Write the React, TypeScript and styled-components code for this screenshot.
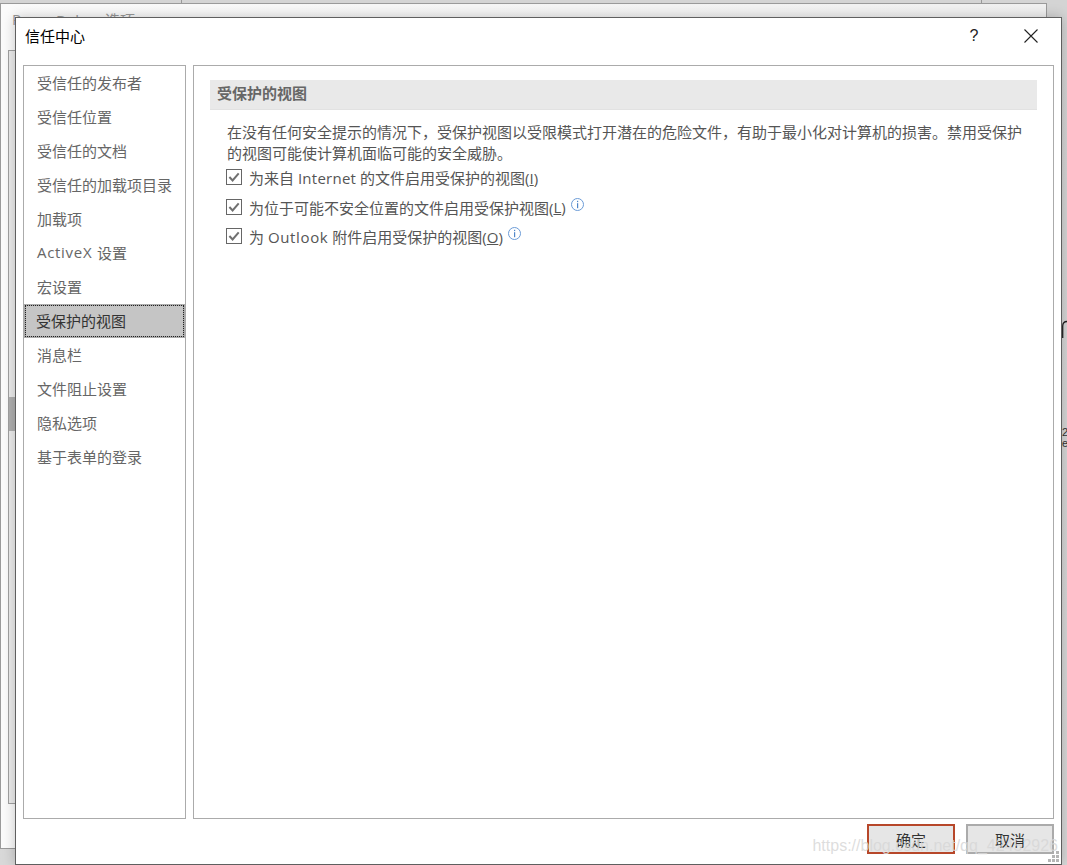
import React from 'react';
import styled, { createGlobalStyle } from 'styled-components';

const FONT = `"Open Sans", "Noto Sans CJK SC", "Noto Sans", sans-serif`;

const Global = createGlobalStyle`
  html, body { margin: 0; padding: 0; width: 1067px; height: 865px; overflow: hidden; background: #d9d9d9; }
  * { box-sizing: border-box; }
  body { font-family: ${FONT}; }
`;

const Desktop = styled.div`
  position: relative;
  width: 1067px;
  height: 865px;
  overflow: hidden;
  background: linear-gradient(#d4d4d4, #d8d8d8);
`;

const BackWindow = styled.div`
  position: absolute;
  left: 0;
  top: 3px;
  width: 1047px;
  height: 846px;
  background: linear-gradient(90deg, #fbfbfb, #f0f0f0);
  border: 1px solid #9a9a9a;
`;

const BackTitle = styled.div`
  position: absolute;
  left: 11px;
  top: 5px;
  font-size: 15px;
  color: #999;
  display: flex;
  gap: 35px;
`;

const BackTitleName = styled.span`
  word-spacing: 6px;
`;

const BackPanel = styled.div`
  position: absolute;
  left: 7px;
  top: 46px;
  width: 1000px;
  height: 754px;
  background: #ececec;
  border: 1px solid #a0a0a0;
`;

const BackThumb = styled.div`
  position: absolute;
  left: 0;
  top: 346px;
  width: 6px;
  height: 34px;
  background: #b0b0b0;
`;

const BackTick = styled.div<{ $x: number }>`
  position: absolute;
  left: ${(p) => p.$x}px;
  top: 0;
  width: 1px;
  height: 3px;
  background: #999;
`;

const BackEdge = styled.div`
  position: absolute;
  left: 1062px;
  top: 320px;
  font-size: 11px;
  line-height: 11px;
  color: #333;
  width: 5px;
  height: 140px;
`;

const EdgeCurve = styled.svg`
  position: absolute;
  left: 0;
  top: 0;
`;

const EdgeText = styled.div`
  position: absolute;
  left: 0;
  top: 107px;
  width: 5px;
  white-space: pre;
  font-family: "Liberation Sans", sans-serif;
`;

const Dialog = styled.div`
  position: absolute;
  left: 15px;
  top: 17px;
  width: 1047px;
  height: 848px;
  background: #fff;
  border: 1px solid #5f5f5f;
  box-shadow: 0 0 12px rgba(0, 0, 0, 0.22);
  display: flex;
  flex-direction: column;
`;

const TitleBar = styled.div`
  height: 47px;
  flex: none;
  display: flex;
  align-items: center;
  padding: 0 23px 12px 9px;
  color: #000;
`;

const Title = styled.div`
  flex: 1;
  font-size: 15px;
`;

const Help = styled.div`
  width: 14px;
  margin-right: 43px;
  font-size: 16px;
  font-family: "Liberation Sans", sans-serif;
  color: #222;
  text-align: center;
`;

const Body = styled.div`
  flex: none;
  height: 754px;
  display: flex;
  gap: 7px;
  padding: 0 7px;
`;

const Sidebar = styled.div`
  width: 163px;
  border: 1px solid #ababab;
  display: flex;
  flex-direction: column;
`;

const NavItem = styled.div<{ $active?: boolean }>`
  height: 34px;
  flex: none;
  display: flex;
  align-items: center;
  font-size: 15px;
  padding-bottom: 2px;
  white-space: pre;
  color: ${(p) => (p.$active ? '#333' : '#666')};
  padding-left: ${(p) => (p.$active ? '10px' : '13px')};
  background: ${(p) => (p.$active ? '#c5c5c5' : 'transparent')};
  ${(p) => p.$active && `
    border: 2px solid #acacac;
    outline: 1px dotted #222;
    outline-offset: -2px;
  `}
`;

const Latin = styled.span<{ $spacing: number }>`
  letter-spacing: ${(p) => p.$spacing}px;
`;

const Panel = styled.div`
  flex: 1;
  border: 1px solid #ababab;
  padding: 14px 16px 0;
`;

const SectionHeader = styled.div`
  height: 30px;
  background: #e9e9e9;
  border-bottom: 1px solid #e2e2e2;
  display: flex;
  align-items: center;
  padding: 0 0 4px 7px;
  font-size: 15px;
  font-weight: 700;
  color: #666;
`;

const Content = styled.div`
  padding: 12px 0 0 17px;
`;

const Intro = styled.div`
  font-size: 15px;
  line-height: 21px;
  color: #555;
  margin-right: 14px;
`;

const OptionList = styled.div`
  margin-top: -1px;
  display: flex;
  flex-direction: column;
`;

const Option = styled.div`
  height: 29.6px;
  display: flex;
  align-items: center;
  font-size: 15px;
  color: #555;
  white-space: pre;
`;

const Check = styled.svg`
  flex: none;
  margin: -1px 7px 0 -1px;
`;

const Key = styled.span`
  text-decoration: underline;
`;

const Info = styled.svg`
  flex: none;
  margin: -6px 0 0 5px;
`;

const Footer = styled.div`
  flex: 1;
  display: flex;
  justify-content: flex-end;
  gap: 11px;
  padding: 5px 7px 0 0;
  position: relative;
`;

const Button = styled.div<{ $primary?: boolean }>`
  width: 88px;
  height: 30px;
  background: #e6e6e6;
  border: 2px solid ${(p) => (p.$primary ? '#b7472a' : '#ababab')};
  display: flex;
  align-items: center;
  justify-content: center;
  font-size: 15px;
  color: #333;
`;

const Watermark = styled.div`
  position: absolute;
  right: 3px;
  top: 18px;
  font-family: "Liberation Sans", sans-serif;
  font-size: 16px;
  color: rgba(215, 215, 215, 0.85);
  white-space: nowrap;
`;

const Grip = styled.svg`
  position: absolute;
  right: 1px;
  bottom: 1px;
`;

const nav: React.ReactNode[] = [
  '受信任的发布者',
  '受信任位置',
  '受信任的文档',
  '受信任的加载项目录',
  '加载项',
  <><Latin $spacing={0.7}>ActiveX </Latin>设置</>,
  '宏设置',
  '受保护的视图',
  '消息栏',
  '文件阻止设置',
  '隐私选项',
  '基于表单的登录',
];

const CheckBox = () => (
  <Check width="16" height="16" viewBox="0 0 16 16">
    <rect x="0.5" y="0.5" width="15" height="15" fill="#fff" stroke="#666" />
    <path d="M3.4 8 L6.6 11.4 L12.7 4.4" fill="none" stroke="#707070" strokeWidth="2" />
  </Check>
);

const InfoIcon = () => (
  <Info width="13" height="13" viewBox="0 0 13 13">
    <circle cx="6.5" cy="6.5" r="6" fill="#fff" stroke="#6b9bd6" />
    <rect x="6" y="2.8" width="1.2" height="1.3" fill="#4f86c9" />
    <rect x="6" y="5.2" width="1.2" height="5" fill="#4f86c9" />
  </Info>
);

export default function App() {
  return (
    <Desktop>
      <Global />
      <BackTick $x={181} />
      <BackTick $x={981} />
      <BackWindow>
        <BackTitle>
          <span>P</span>
          <BackTitleName>Delve 选项</BackTitleName>
        </BackTitle>
        <BackPanel>
          <BackThumb />
        </BackPanel>
      </BackWindow>
      <BackEdge>
        <EdgeCurve width="5" height="20" viewBox="0 0 5 20">
          <path d="M0.7 18 V6 Q0.7 1.5 5 1.5" fill="none" stroke="#222" strokeWidth="1.3" />
        </EdgeCurve>
        <EdgeText>{'2\ne'}</EdgeText>
      </BackEdge>
      <Dialog>
        <TitleBar>
          <Title>信任中心</Title>
          <Help>?</Help>
          <svg width="14" height="14" viewBox="0 0 14 14">
            <path d="M0.5 0.5 L13.5 13.5 M13.5 0.5 L0.5 13.5" stroke="#222" strokeWidth="1.1" fill="none" />
          </svg>
        </TitleBar>
        <Body>
          <Sidebar>
            {nav.map((n, i) => (
              <NavItem key={i} $active={n === '受保护的视图'}>{n}</NavItem>
            ))}
          </Sidebar>
          <Panel>
            <SectionHeader>受保护的视图</SectionHeader>
            <Content>
              <Intro>
                在没有任何安全提示的情况下，受保护视图以受限模式打开潜在的危险文件，有助于最小化对计算机的损害。禁用受保护的视图可能使计算机面临可能的安全威胁。
              </Intro>
              <OptionList>
                <Option><CheckBox />为来自 <Latin $spacing={0.25}>Internet</Latin> 的文件启用受保护的视图(<Key>I</Key>)</Option>
                <Option><CheckBox />为位于可能不安全位置的文件启用受保护视图(<Key>L</Key>)<InfoIcon /></Option>
                <Option><CheckBox />为 <Latin $spacing={0.65}>Outlook</Latin> 附件启用受保护的视图(<Key>O</Key>)<InfoIcon /></Option>
              </OptionList>
            </Content>
          </Panel>
        </Body>
        <Footer>
          <Button $primary>确定</Button>
          <Button>取消</Button>
          <Watermark>https://blog.csdn.net/qq_42452926</Watermark>
          <Grip width="12" height="12" viewBox="0 0 12 12">
            <g fill="#b5b5b5">
              <rect x="8" y="0" width="3" height="3" />
              <rect x="4" y="4" width="3" height="3" />
              <rect x="8" y="4" width="3" height="3" />
              <rect x="0" y="8" width="3" height="3" />
              <rect x="4" y="8" width="3" height="3" />
              <rect x="8" y="8" width="3" height="3" />
            </g>
          </Grip>
        </Footer>
      </Dialog>
    </Desktop>
  );
}
